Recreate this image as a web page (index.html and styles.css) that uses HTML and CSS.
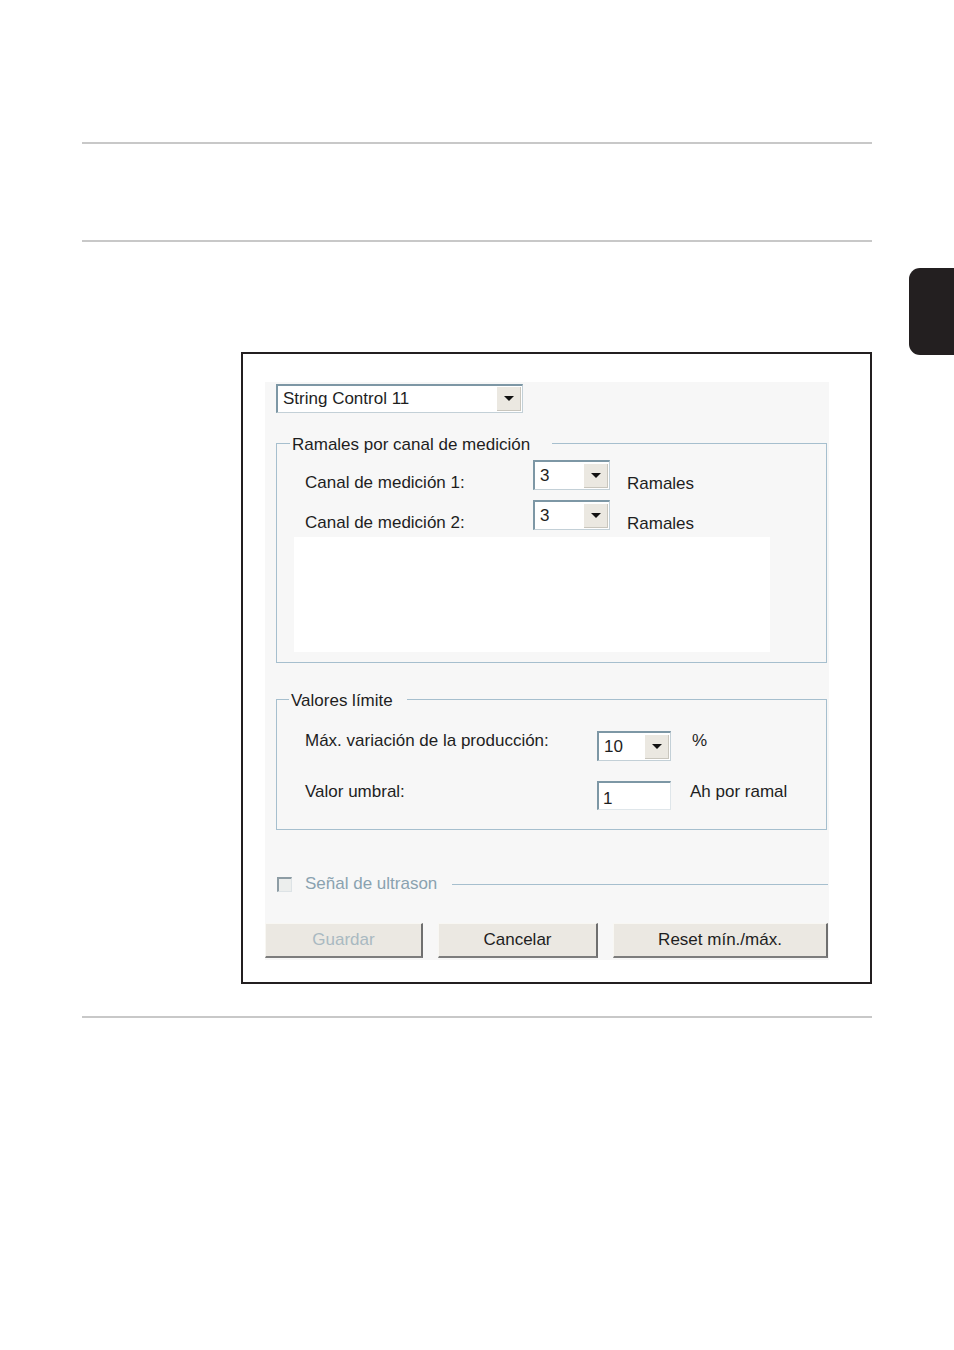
FILE: index.html
```html
<!DOCTYPE html>
<html lang="es">
<head>
    <meta charset="UTF-8">
    <meta name="viewport" content="width=device-width, initial-scale=1.0">
    <title>String Control - Configuración</title>
    <link rel="stylesheet" href="styles.css">
</head>
<body>
    <div class="rule rule-top"></div>
    <div class="rule rule-second"></div>

    <div class="content">
        <div class="main">
            <div class="shot">
                <div class="dialog">
                    <div class="combo combo-device">
                        <span class="combo-value">String Control 11</span>
                        <span class="combo-btn"><span class="arrow"></span></span>
                    </div>

                    <fieldset class="group group-ramales">
                        <legend>Ramales por canal de medición</legend>
                        <div class="row row-first">
                            <span class="label label-canal">Canal de medición 1:</span>
                            <div class="combo combo-small">
                                <span class="combo-value">3</span>
                                <span class="combo-btn"><span class="arrow"></span></span>
                            </div>
                            <span class="unit unit-ramales">Ramales</span>
                        </div>
                        <div class="row row-next">
                            <span class="label label-canal">Canal de medición 2:</span>
                            <div class="combo combo-small">
                                <span class="combo-value">3</span>
                                <span class="combo-btn"><span class="arrow"></span></span>
                            </div>
                            <span class="unit unit-ramales">Ramales</span>
                        </div>
                        <div class="list-area"></div>
                    </fieldset>

                    <fieldset class="group group-limites">
                        <legend>Valores límite</legend>
                        <div class="row row-limit-first">
                            <span class="label label-limit">Máx. variación de la producción:</span>
                            <div class="combo combo-percent">
                                <span class="combo-value">10</span>
                                <span class="combo-btn"><span class="arrow"></span></span>
                            </div>
                            <span class="unit unit-percent">%</span>
                        </div>
                        <div class="row row-limit-next">
                            <span class="label label-limit label-umbral">Valor umbral:</span>
                            <div class="textbox">1</div>
                            <span class="unit unit-ah">Ah por ramal</span>
                        </div>
                    </fieldset>

                    <div class="check-row">
                        <span class="checkbox"></span>
                        <span class="check-label">Señal de ultrason</span>
                        <span class="check-line"></span>
                    </div>

                    <div class="buttons">
                        <button class="btn btn-save" disabled>Guardar</button>
                        <button class="btn btn-cancel">Cancelar</button>
                        <button class="btn btn-reset">Reset mín./máx.</button>
                    </div>
                </div>
            </div>
        </div>
        <div class="tab"></div>
    </div>

    <div class="rule rule-bottom"></div>
</body>
</html>
```

FILE: styles.css
```css
body {
    margin: 0;
    padding: 0 0 0 82px;
    font-family: 'Liberation Sans', Arial, sans-serif;
    color: #1e1e1e;
    background: #fff;
}

.rule {
    width: 790px;
    height: 2px;
    background: #c8c8c8;
}

.rule-top {
    margin-top: 142px;
}

.rule-second {
    margin-top: 96px;
}

.rule-bottom {
    margin-top: 32px;
}

.content {
    display: flex;
    align-items: flex-start;
}

.main {
    width: 790px;
}

.tab {
    width: 45px;
    height: 87px;
    margin: 26px 0 0 37px;
    background: #231f20;
    border-radius: 11px 0 0 11px;
}

/* screenshot frame */
.shot {
    box-sizing: border-box;
    width: 631px;
    height: 632px;
    margin: 110px 0 0 159px;
    padding: 28px 0 0 22px;
    border: 2px solid #231f20;
}

.dialog {
    box-sizing: border-box;
    width: 564px;
    padding: 2px 0 2px 0;
    background: #f7f7f7;
    font-size: 17px;
    line-height: 20px;
}

/* combo boxes */
.combo {
    box-sizing: border-box;
    display: flex;
    align-items: center;
    background: #fff;
    border-top: 2px solid #7d97a5;
    border-left: 2px solid #7d97a5;
    border-right: 1px solid #c3d0d7;
    border-bottom: 1px solid #c3d0d7;
}

.combo-value {
    flex: 1;
    padding-left: 5px;
    white-space: nowrap;
}

.combo-btn {
    display: flex;
    align-items: center;
    justify-content: center;
    width: 23px;
    height: 23px;
    margin-right: 1px;
    background: #ebe8e1;
    border-right: 1px solid #c9c6bd;
    border-bottom: 1px solid #c9c6bd;
}

.arrow {
    width: 0;
    height: 0;
    border-left: 5px solid transparent;
    border-right: 5px solid transparent;
    border-top: 5px solid #111;
}

.combo-device {
    width: 247px;
    height: 29px;
    margin-left: 11px;
}

.combo-small {
    width: 77px;
    height: 30px;
}

.combo-percent {
    width: 74px;
    height: 30px;
}

.textbox {
    box-sizing: border-box;
    width: 74px;
    height: 29px;
    padding: 6px 0 0 4px;
    background: #fff;
    border-top: 2px solid #7d97a5;
    border-left: 2px solid #7d97a5;
    border-right: 1px solid #dfe6ea;
    border-bottom: 1px solid #dfe6ea;
}

/* group boxes */
.group {
    box-sizing: border-box;
    width: 551px;
    margin: 0 0 0 11px;
    padding: 0;
    border: 1px solid #a6bfce;
    min-inline-size: 0;
}

.group legend {
    padding: 0 22px 0 2px;
    margin-left: 13px;
    line-height: 20px;
    position: relative;
    top: 2px;
}

.group-ramales {
    margin-top: 20px;
    padding-bottom: 10px;
}

.group-limites {
    margin-top: 26px;
    padding-bottom: 19px;
}

.group-limites legend {
    margin-left: 12px;
    padding-right: 14px;
}

.row {
    display: flex;
    align-items: flex-start;
    height: 30px;
    margin-left: 28px;
    white-space: nowrap;
}

.row-first {
    margin-top: 7px;
}

.row-next {
    margin-top: 10px;
}

.label-canal {
    width: 228px;
    margin-top: 13px;
}

.unit-ramales {
    margin: 14px 0 0 17px;
}

.list-area {
    width: 476px;
    height: 115px;
    margin: 7px 0 0 17px;
    background: #fff;
}

.row-limit-first {
    margin-top: 22px;
}

.row-limit-next {
    height: 29px;
    margin-top: 20px;
}

.label-limit {
    width: 292px;
}

.label-umbral {
    margin-top: 1px;
}

.unit-percent {
    margin-left: 21px;
}

.unit-ah {
    margin: 1px 0 0 19px;
}

/* disabled checkbox with separator */
.check-row {
    display: flex;
    align-items: center;
    height: 20px;
    margin: 44px 1px 0 12px;
}

.checkbox {
    box-sizing: border-box;
    width: 15px;
    height: 15px;
    background: #eceeed;
    border-top: 2px solid #8d9ca4;
    border-left: 2px solid #8d9ca4;
    border-right: 1px solid #dde3e6;
    border-bottom: 1px solid #dde3e6;
}

.check-label {
    margin-left: 13px;
    color: #8aa2b0;
    white-space: nowrap;
}

.check-line {
    flex: 1;
    height: 1px;
    margin-left: 15px;
    background: #a6bfce;
}

/* buttons */
.buttons {
    display: flex;
    gap: 15px;
    margin-top: 29px;
}

.btn {
    box-sizing: border-box;
    height: 35px;
    padding: 0;
    font-family: inherit;
    font-size: 17px;
    color: #1e1e1e;
    background: #ebe8e2;
    border-top: 1px solid #f8f7f3;
    border-left: 1px solid #f8f7f3;
    border-right: 2px solid #6f6f6f;
    border-bottom: 2px solid #7d7d7d;
    border-radius: 0;
}

.btn-save {
    width: 158px;
    color: #a9b9c1;
}

.btn-cancel {
    width: 160px;
}

.btn-reset {
    width: 215px;
}
```
